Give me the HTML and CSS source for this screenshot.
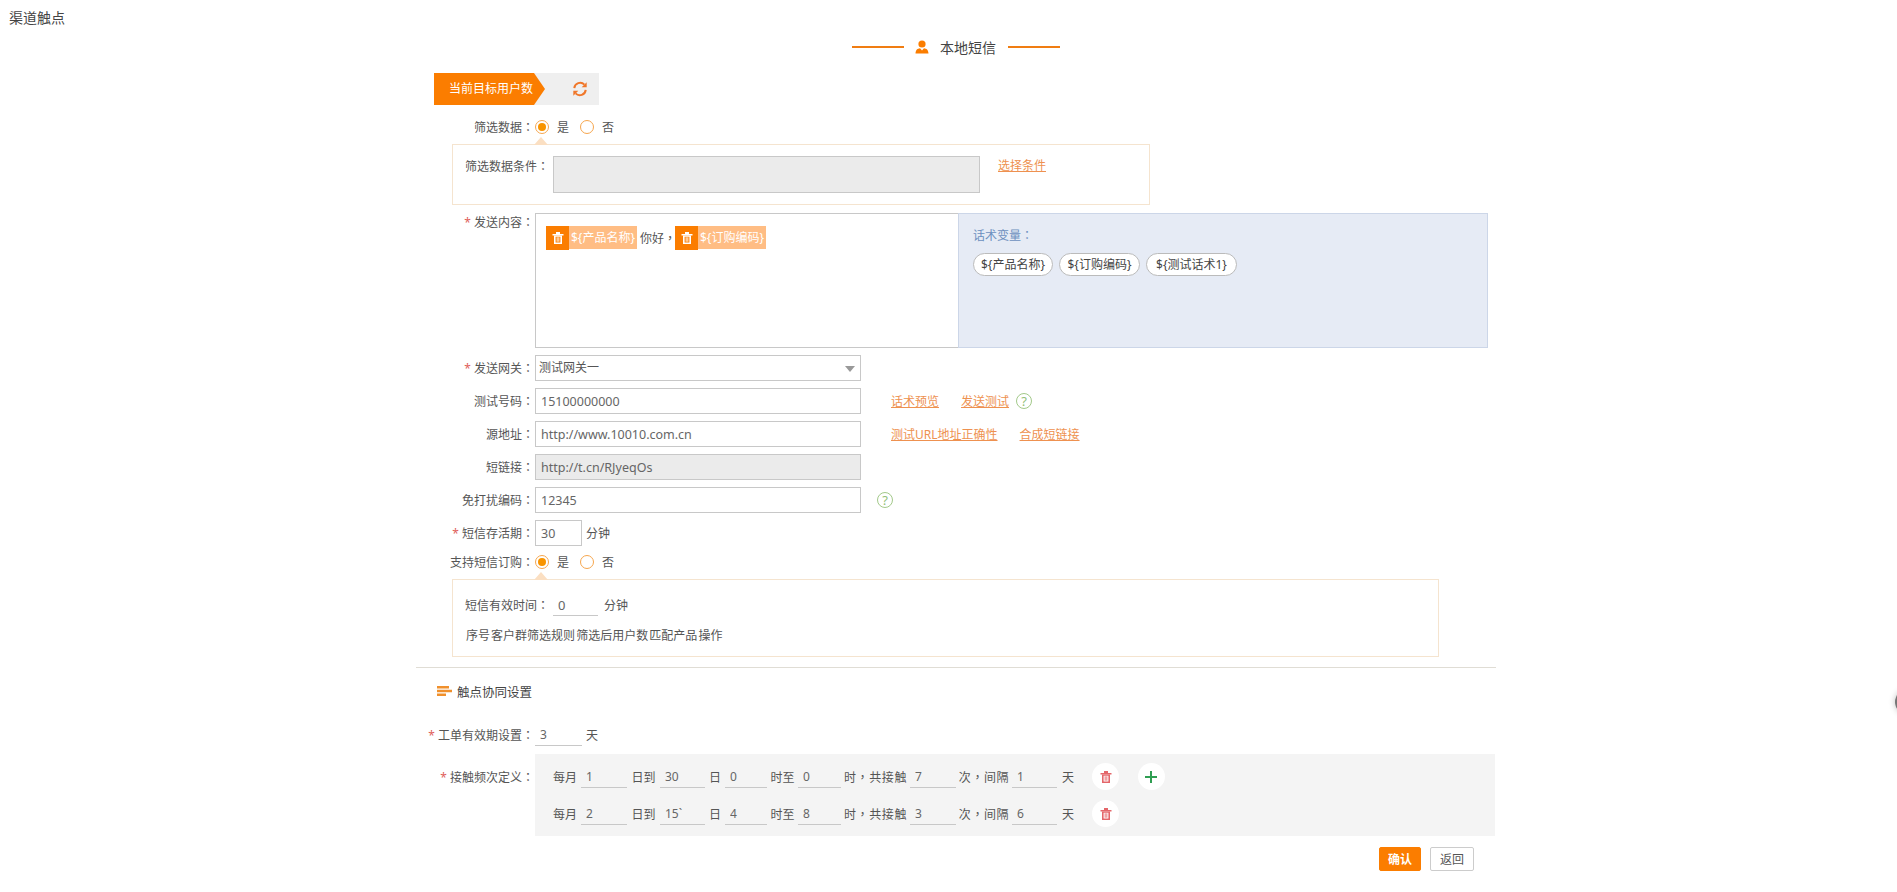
FILE: index.html
```html
<!DOCTYPE html>
<html lang="zh-CN">
<head>
<meta charset="utf-8">
<title>渠道触点</title>
<link rel="stylesheet" href="styles.css">
</head>
<body>
<svg class="defs" width="0" height="0" aria-hidden="true">
  <symbol id="trash" viewBox="0 0 14 14">
    <path d="M1.5 3h11v1.400h-11zM5 1h4v2H5z" fill="currentColor"/>
    <path d="M3 4.400h8V13H3zM4.600 5.800v5.800h4.800V5.800z" fill="currentColor" fill-rule="evenodd"/>
    <path d="M5.700 6.200h.9v4.600h-.9zM7.400 6.200h.9v4.600h-.9z" fill="currentColor"/>
  </symbol>
</svg>
<h1 class="page-title">渠道触点</h1>
<main class="form">
  <div class="heading">
    <span class="heading-line"></span>
    <svg class="heading-icon" viewBox="0 0 14 14"><circle cx="7" cy="4" r="3.600" fill="#fb7d00"/><path d="M0.500 13.500c.2-3.600 2-5 4.500-5.200L7 10.400l2-2.100c2.500.2 4.300 1.600 4.500 5.200z" fill="#fb7d00"/></svg>
    <span class="heading-text">本地短信</span>
    <span class="heading-line"></span>
  </div>

  <div class="target">
    <div class="target-tag">当前目标用户数</div>
    <svg class="refresh" viewBox="0 0 16 16"><path d="M2.300 7.200A5.900 5.900 0 0 1 12.400 3.600" fill="none" stroke="#f0772a" stroke-width="2"/><path d="M14.700 1.200v5h-5z" fill="#f0772a"/><path d="M13.700 8.800A5.900 5.900 0 0 1 3.600 12.400" fill="none" stroke="#f0772a" stroke-width="2"/><path d="M1.300 14.800v-5h5z" fill="#f0772a"/></svg>
  </div>

  <div class="row row-radio">
    <div class="label">筛选数据<span class="p" lang="zh-TW">：</span></div>
    <span class="radio radio-on"></span><span class="radio-text">是</span>
    <span class="radio"></span><span class="radio-text">否</span>
  </div>
  <section class="tip-box tip-filter">
    <span class="tip-arrow"></span>
    <span class="tip-label">筛选数据条件<span class="p" lang="zh-TW">：</span></span>
    <div class="condition"></div>
    <a class="link link-condition">选择条件</a>
  </section>

  <div class="row row-content">
    <div class="label"><span class="star">*</span>发送内容<span class="p" lang="zh-TW">：</span></div>
    <div class="content-edit">
      <span class="tag"><span class="tag-del"><svg class="icon-trash"><use href="#trash"/></svg></span><span class="tag-name">${产品名称}</span></span>
      <span class="plain">你好<span class="p" lang="zh-TW">，</span></span>
      <span class="tag"><span class="tag-del"><svg class="icon-trash"><use href="#trash"/></svg></span><span class="tag-name">${订购编码}</span></span>
    </div>
    <div class="vars">
      <div class="vars-title">话术变量<span class="p" lang="zh-TW">：</span></div>
      <div class="vars-list">
        <span class="var">${产品名称}</span>
        <span class="var">${订购编码}</span>
        <span class="var">${测试话术1}</span>
      </div>
    </div>
  </div>

  <div class="row row-field">
    <div class="label"><span class="star">*</span>发送网关<span class="p" lang="zh-TW">：</span></div>
    <div class="select">测试网关一<span class="caret"></span></div>
  </div>
  <div class="row row-field">
    <div class="label">测试号码<span class="p" lang="zh-TW">：</span></div>
    <input class="input" value="15100000000">
    <a class="link link-first">话术预览</a>
    <a class="link link-next">发送测试</a>
    <span class="help help-near">?</span>
  </div>
  <div class="row row-field">
    <div class="label">源地址<span class="p" lang="zh-TW">：</span></div>
    <input class="input" value="http://www.10010.com.cn">
    <a class="link link-first">测试URL地址正确性</a>
    <a class="link link-next">合成短链接</a>
  </div>
  <div class="row row-field">
    <div class="label">短链接<span class="p" lang="zh-TW">：</span></div>
    <input class="input input-off" value="http://t.cn/RJyeqOs" readonly>
  </div>
  <div class="row row-field">
    <div class="label">免打扰编码<span class="p" lang="zh-TW">：</span></div>
    <input class="input" value="12345">
    <span class="help help-far">?</span>
  </div>
  <div class="row row-field">
    <div class="label"><span class="star">*</span>短信存活期<span class="p" lang="zh-TW">：</span></div>
    <input class="input input-short" value="30">
    <span class="unit">分钟</span>
  </div>

  <div class="row row-radio row-radio-sub">
    <div class="label">支持短信订购<span class="p" lang="zh-TW">：</span></div>
    <span class="radio radio-on"></span><span class="radio-text">是</span>
    <span class="radio"></span><span class="radio-text">否</span>
  </div>
  <section class="tip-box tip-sub">
    <span class="tip-arrow"></span>
    <div class="sub-line">
      <span class="sub-label">短信有效时间<span class="p" lang="zh-TW">：</span></span>
      <input class="line-input line-sub" value="0">
      <span class="unit unit-sub">分钟</span>
    </div>
    <div class="sub-note">序号 客户群筛选规则 筛选后用户数 匹配产品 操作</div>
  </section>

  <hr class="divider">

  <h2 class="section-title">
    <svg class="section-icon" viewBox="0 0 15 10"><path d="M0 0h12v2.400H0zM0 3.800h15v2.400H0zM0 7.600h9V10H0z" fill="#f0902c"/></svg>
    触点协同设置
  </h2>

  <div class="row row-valid">
    <div class="label"><span class="star">*</span>工单有效期设置<span class="p" lang="zh-TW">：</span></div>
    <input class="line-input line-valid" value="3">
    <span class="unit">天</span>
  </div>

  <div class="row row-freq">
    <div class="label label-freq"><span class="star">*</span>接触频次定义<span class="p" lang="zh-TW">：</span></div>
    <div class="freq">
      <div class="freq-row">
        <span>每月</span><input class="line-input" value="1">
        <span class="mid">日到</span><input class="line-input" value="30">
        <span class="mid">日</span><input class="line-input" value="0">
        <span class="mid">时至</span><input class="line-input" value="0">
        <span class="mid wide">时<span class="p" lang="zh-TW">，</span>共接触</span><input class="line-input" value="7">
        <span class="mid wide">次<span class="p" lang="zh-TW">，</span>间隔</span><input class="line-input" value="1">
        <span class="day">天</span>
        <button class="round round-del" type="button"><svg class="icon-trash"><use href="#trash"/></svg></button>
        <button class="round round-add" type="button"><svg class="icon-plus" viewBox="0 0 12 12"><path d="M5 0h2v5h5v2H7v5H5V7H0V5h5z" fill="#2f9e52"/></svg></button>
      </div>
      <div class="freq-row">
        <span>每月</span><input class="line-input" value="2">
        <span class="mid">日到</span><input class="line-input" value="15`">
        <span class="mid">日</span><input class="line-input" value="4">
        <span class="mid">时至</span><input class="line-input" value="8">
        <span class="mid wide">时<span class="p" lang="zh-TW">，</span>共接触</span><input class="line-input" value="3">
        <span class="mid wide">次<span class="p" lang="zh-TW">，</span>间隔</span><input class="line-input" value="6">
        <span class="day">天</span>
        <button class="round round-del" type="button"><svg class="icon-trash"><use href="#trash"/></svg></button>
      </div>
    </div>
  </div>

  <div class="actions">
    <button class="btn btn-primary" type="button">确认</button>
    <button class="btn btn-back" type="button">返回</button>
  </div>
</main>
<span class="edge-handle"></span>
</body>
</html>
```

FILE: styles.css
```css
* {
  box-sizing: border-box;
}

html,
body {
  margin: 0;
  height: 892px;
  overflow: hidden;
  background: #fff;
}

body {
  font-family: "Noto Sans", "Noto Sans CJK SC", sans-serif;
  font-size: 12px;
  color: #555;
}

/* centred full-width colon and comma, as the reference draws them */
.p {
  font-family: "Noto Sans CJK TC", sans-serif;
}

.defs {
  position: absolute;
}

.page-title {
  height: 36px;
  margin: 0;
  padding: 0 0 0 9px;
  font-size: 14px;
  font-weight: 400;
  line-height: 36px;
  color: #444;
}

.form {
  width: 1080px;
  margin-left: 416px;
}

.heading {
  display: flex;
  align-items: center;
  justify-content: center;
  height: 22px;
  margin-bottom: 15px;
  font-size: 14px;
  color: #444;
}

.heading-line {
  width: 52px;
  height: 2px;
  background: #f07d12;
}

.heading-icon {
  width: 14px;
  height: 14px;
  margin: 0 11px;
}

.heading-text {
  margin-right: 12px;
}

.target {
  display: flex;
  align-items: center;
  width: 165px;
  height: 32px;
  margin-left: 18px;
  background: #efefef;
}

.target-tag {
  width: 111px;
  height: 32px;
  padding-left: 15px;
  line-height: 32px;
  color: #fff;
  white-space: nowrap;
  background: #fb7d00;
  clip-path: polygon(0 0, 100px 0, 111px 50%, 100px 100%, 0 100%);
}

.refresh {
  width: 16px;
  height: 16px;
  margin-left: 27px;
}

.row {
  display: flex;
  align-items: center;
}

.label {
  flex: none;
  width: 118px;
  margin-right: 1px;
  text-align: right;
  white-space: nowrap;
}

.star {
  margin-right: 3px;
  color: #e0605a;
}

.row-radio {
  height: 20px;
  margin-top: 12px;
}

.radio {
  flex: none;
  position: relative;
  width: 14px;
  height: 14px;
  border: 1px solid #f6a64e;
  border-radius: 50%;
  background: #fff;
}

.radio-on::after {
  content: "";
  position: absolute;
  inset: 2px;
  border-radius: 50%;
  background: #f89400;
}

.radio-text {
  margin: 0 11px 0 8px;
}

.tip-box {
  position: relative;
  margin: 7px 0 0 36px;
  border: 1px solid #f5e4cf;
}

.tip-arrow {
  position: absolute;
  top: -8px;
  left: 81px;
  width: 0;
  height: 0;
  border-right: 7.500px solid transparent;
  border-bottom: 8px solid #fbdfc2;
  border-left: 7.500px solid transparent;
}

.tip-filter {
  display: flex;
  align-items: flex-start;
  width: 698px;
  height: 61px;
  padding: 11px 0 0 12px;
}

.tip-label {
  width: 88px;
  line-height: 19px;
  white-space: nowrap;
}

.condition {
  width: 427px;
  height: 37px;
  border: 1px solid #c8c8c8;
  background: #ebebeb;
}

.link {
  color: #ee9150;
  text-decoration: underline;
  white-space: nowrap;
  cursor: pointer;
}

.link-condition {
  margin-left: 18px;
  line-height: 19px;
}

.row-content {
  align-items: flex-start;
  height: 135px;
  margin-top: 8px;
}

.row-content .label {
  line-height: 18px;
}

.content-edit {
  display: flex;
  align-items: flex-start;
  width: 423px;
  height: 135px;
  padding: 12px 0 0 10px;
  border: 1px solid #c8c8c8;
  border-right: 0;
}

.tag {
  display: flex;
  align-items: flex-start;
}

.tag-del {
  display: flex;
  align-items: center;
  justify-content: center;
  width: 23px;
  height: 24px;
  color: #fff;
  background: #fb7d00;
}

.icon-trash {
  width: 14px;
  height: 14px;
}

.tag-name {
  width: 68px;
  height: 23px;
  padding-left: 2px;
  line-height: 23px;
  color: #fff;
  background: #ffbd84;
  white-space: nowrap;
}

.plain {
  width: 38px;
  padding-left: 3px;
  line-height: 24px;
  white-space: nowrap;
}

.vars {
  width: 530px;
  height: 135px;
  padding: 12px 0 0 14px;
  border: 1px solid #ccd6e8;
  background: #e6ebf5;
}

.vars-title {
  line-height: 18px;
  color: #6d90bf;
}

.vars-list {
  display: grid;
  grid-template-columns: 80px 81px 91px;
  gap: 6px;
  margin-top: 8px;
}

.var {
  height: 23px;
  border: 1px solid #bbb;
  border-radius: 12px;
  line-height: 21px;
  text-align: center;
  color: #444;
  background: #fff;
  white-space: nowrap;
}

.row-field {
  height: 26px;
  margin-top: 7px;
}

.select {
  position: relative;
  width: 326px;
  height: 26px;
  padding-left: 3px;
  border: 1px solid #c8c8c8;
  line-height: 24px;
  background: #fff;
}

.caret {
  position: absolute;
  top: 10px;
  right: 5px;
  width: 0;
  height: 0;
  border-top: 6px solid #999;
  border-right: 5px solid transparent;
  border-left: 5px solid transparent;
}

.input {
  width: 326px;
  height: 26px;
  padding: 0 5px;
  border: 1px solid #c8c8c8;
  font: inherit;
  font-size: 12.500px;
  color: #666;
  background: #fff;
  outline: 0;
}

.input-off {
  background: #ebebeb;
}

.input-short {
  width: 47px;
}

.link-first {
  margin-left: 30px;
}

.link-next {
  margin-left: 22px;
}

.help {
  display: flex;
  align-items: center;
  justify-content: center;
  width: 16px;
  height: 16px;
  border: 1px solid #a3c98a;
  border-radius: 50%;
  font-size: 13px;
  line-height: 1;
  color: #93bf78;
}

.help-near {
  margin-left: 7px;
}

.help-far {
  margin-left: 16px;
}

.unit {
  margin-left: 4px;
  white-space: nowrap;
}

.unit-sub {
  margin-left: 6px;
}

.row-radio-sub {
  margin-top: 6px;
}

.tip-sub {
  width: 987px;
  height: 78px;
  padding: 14px 0 0 12px;
}

.sub-line {
  display: flex;
  align-items: center;
  height: 22px;
}

.sub-label {
  width: 88px;
  white-space: nowrap;
}

.line-input {
  width: 100%;
  min-width: 0;
  height: 22px;
  padding: 0 5px;
  border: 0;
  border-bottom: 1px solid #c8c8c8;
  font: inherit;
  color: #666;
  background: transparent;
  outline: 0;
}

.line-sub {
  width: 45px;
  font-size: 13px;
}

.sub-note {
  margin-top: 10px;
  padding-left: 1px;
  line-height: 20px;
  word-spacing: -2px;
  white-space: nowrap;
}

.divider {
  height: 1px;
  margin: 10px 0 0;
  border: 0;
  background: #e0ddd5;
}

.section-title {
  display: flex;
  align-items: center;
  height: 20px;
  margin: 13px 0 0 21px;
  font-size: 12.500px;
  font-weight: 400;
  color: #444;
}

.section-icon {
  width: 15px;
  height: 10px;
  margin-right: 5px;
}

.row-valid {
  height: 22px;
  margin-top: 23px;
}

.line-valid {
  width: 47px;
}

.row-freq {
  align-items: flex-start;
  margin-top: 8px;
}

.label-freq {
  padding-top: 14px;
  line-height: 18px;
}

.freq {
  display: flex;
  flex-direction: column;
  gap: 15px;
  width: 960px;
  height: 82px;
  padding: 12px 0 0 18px;
  background: #f4f4f4;
}

.freq-row {
  display: grid;
  grid-template-columns: 28px 46px 33px 45px 20px 42px 31px 43px 69px 46px 56px 45px 35px 27px 45.500px;
  align-items: center;
  height: 22px;
  white-space: nowrap;
}

.mid {
  text-align: center;
}

.wide {
  letter-spacing: .6px;
}

.day {
  padding-left: 5px;
}

.round {
  display: flex;
  align-items: center;
  justify-content: center;
  width: 27px;
  height: 27px;
  margin: -3px 0 -2px;
  padding: 0;
  border: 0;
  border-radius: 50%;
  background: #fff;
}

.round-del {
  color: #e4666a;
}

.round-add {
  margin-left: 18.500px;
}

.icon-plus {
  width: 12px;
  height: 12px;
}

.actions {
  display: flex;
  justify-content: flex-end;
  gap: 9px;
  margin-top: 11px;
  padding-right: 22px;
}

.btn {
  height: 24px;
  padding: 0;
  border: 1px solid #ccc;
  border-radius: 2px;
  font: inherit;
  color: #555;
  background: #fff;
}

.btn-back {
  width: 44px;
}

.btn-primary {
  width: 42px;
  border-color: #fb7d00;
  font-weight: 700;
  color: #fff;
  background: #fb7d00;
}

.edge-handle {
  position: fixed;
  top: 690px;
  right: -22px;
  width: 24px;
  height: 24px;
  border-radius: 50%;
  background: #777;
  box-shadow: 0 0 6px rgba(0, 0, 0, .25);
}
```
